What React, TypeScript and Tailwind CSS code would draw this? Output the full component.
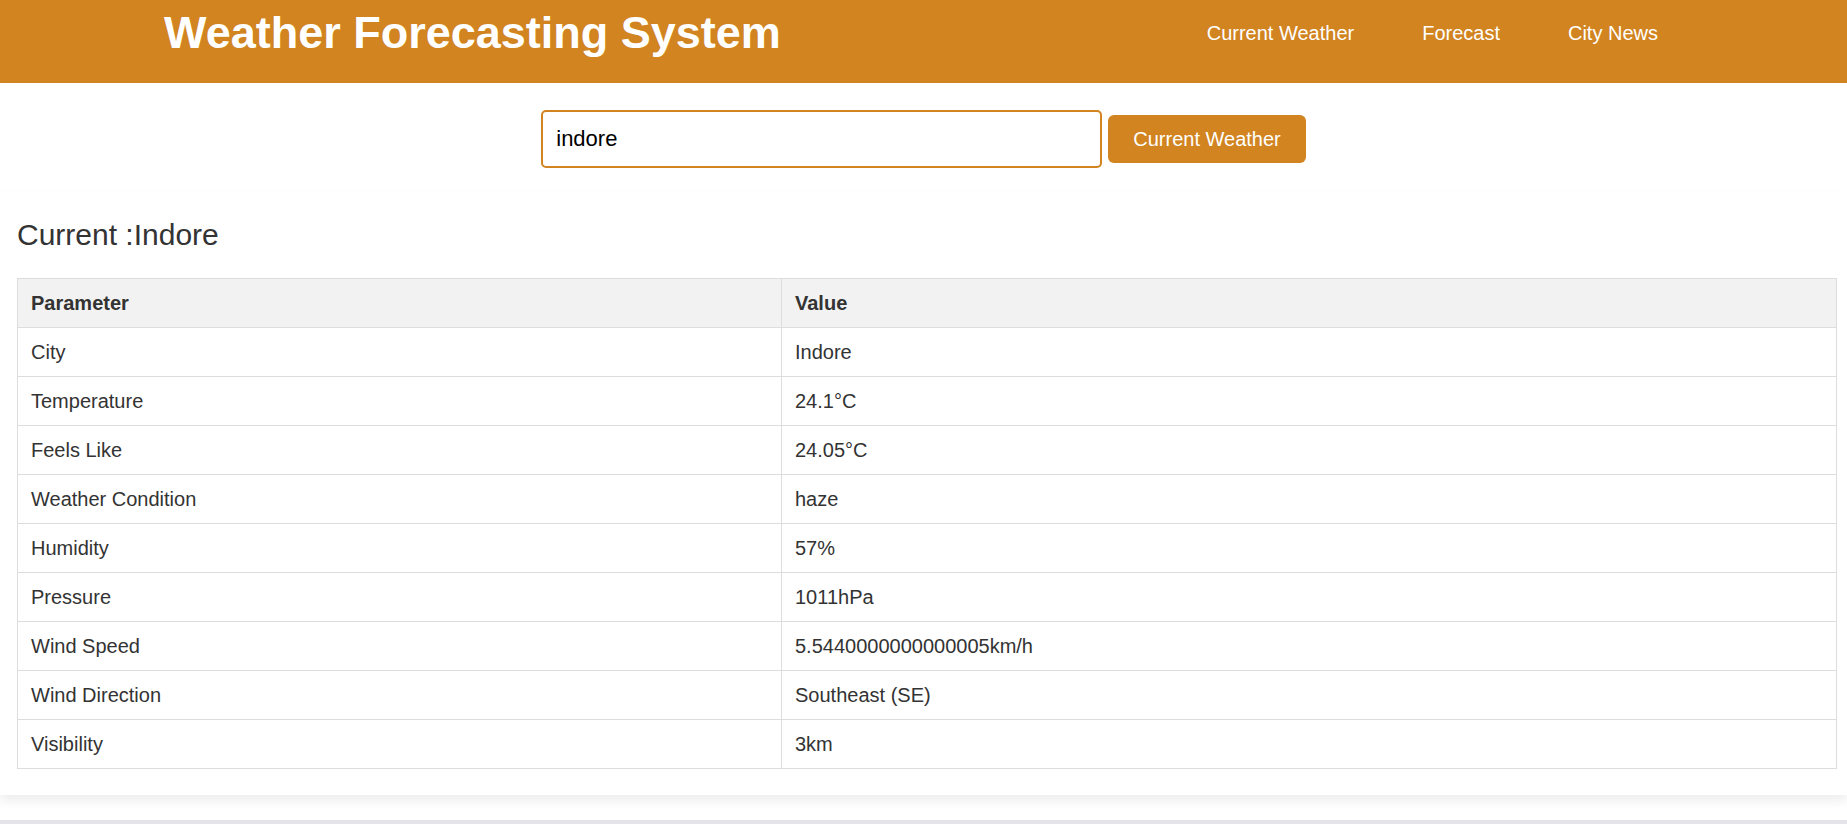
const rows: [string, string][] = [
    ['City', 'Indore'],
    ['Temperature', '24.1°C'],
    ['Feels Like', '24.05°C'],
    ['Weather Condition', 'haze'],
    ['Humidity', '57%'],
    ['Pressure', '1011hPa'],
    ['Wind Speed', '5.5440000000000005km/h'],
    ['Wind Direction', 'Southeast (SE)'],
    ['Visibility', '3km'],
];

export default function App() {
    return (
        <div className="min-h-screen bg-white font-['Liberation_Sans',Arial,sans-serif] text-[#333]">
            {/* Header */}
            <header className="h-[83px] bg-[#d18420] text-white">
                <div className="flex h-[66px] items-center justify-between pl-[164px] pr-[189px]">
                    <h1 className="text-[45px] font-bold leading-[normal]">Weather Forecasting System</h1>
                    <nav className="flex items-center gap-[68px] text-[20px] leading-[normal]">
                        <a>Current Weather</a>
                        <a>Forecast</a>
                        <a>City News</a>
                    </nav>
                </div>
            </header>

            {/* Search */}
            <div className="flex items-center justify-center gap-[6px] pt-[27px] pb-[24px]">
                <input
                    defaultValue="indore"
                    className="h-[58px] w-[561px] rounded-[5px] border-2 border-[#d18420] bg-white px-[13px] text-[22px] text-black outline-none"
                />
                <button className="h-[48px] rounded-[6px] bg-[#d18420] px-[25px] text-[20px] text-white">
                    Current Weather
                </button>
            </div>

            {/* Result card */}
            <div className="bg-white pt-[26px] pb-[26px] pl-[17px] pr-[10px] shadow-[0_6px_10px_rgba(0,0,0,0.07)]">
                <h2 className="mb-[26px] text-[30px] leading-[normal] font-normal">Current :Indore</h2>
                <table className="w-full border-collapse text-[20px]">
                    <thead>
                        <tr className="bg-[#f2f2f2]">
                            <th className="w-[764px] border border-[#ddd] px-[13px] py-[12px] text-left leading-[24px] font-bold">
                                Parameter
                            </th>
                            <th className="border border-[#ddd] px-[13px] py-[12px] text-left leading-[24px] font-bold">
                                Value
                            </th>
                        </tr>
                    </thead>
                    <tbody>
                        {rows.map(([k, v]) => (
                            <tr key={k}>
                                <td className="border border-[#ddd] px-[13px] py-[12px] leading-[24px]">{k}</td>
                                <td className="border border-[#ddd] px-[13px] py-[12px] leading-[24px]">{v}</td>
                            </tr>
                        ))}
                    </tbody>
                </table>
            </div>

            <div className="mt-[25px] h-[30px] bg-[#e3e3e9]" />
        </div>
    );
}
